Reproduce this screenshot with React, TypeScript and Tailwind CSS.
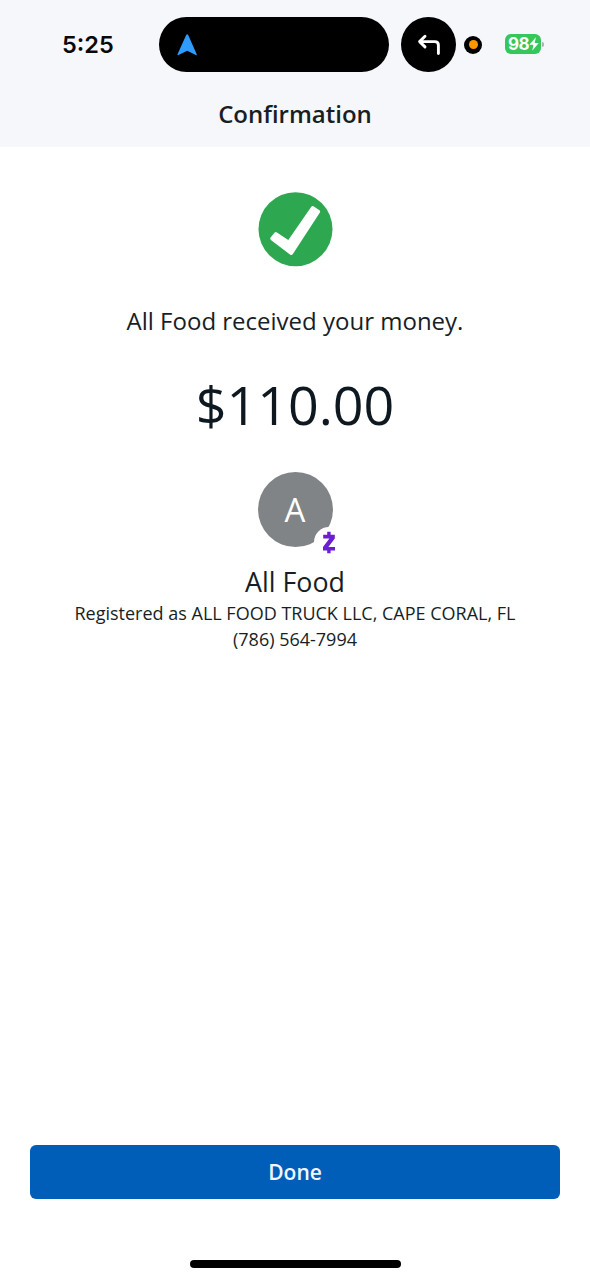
function StatusBar() {
  return (
    <div className="flex h-[89px] items-center pl-[62px]">
      <span className="w-[97px] font-['Inter',sans-serif] text-[23.5px] leading-none font-semibold text-[#08090b]">
        5:25
      </span>
      <div className="flex h-[55px] w-[230px] items-center rounded-full bg-black pl-[18px]">
        <svg className="h-[22px] w-5" viewBox="0 0 20 22" fill="#2f9bff">
          <path d="M9.2 0.9Q10.2 -0.6 11.2 0.9L19.7 20.2Q19.9 21.4 18.8 21.1L10.2 16.8L1.5 21.1Q0.2 21.4 0.5 20.2Z" />
        </svg>
      </div>
      <div className="ml-3 flex size-[55px] items-center justify-center rounded-full bg-black">
        <svg
          className="h-6 w-6"
          viewBox="0 0 24 24"
          fill="none"
          stroke="#fff"
          strokeWidth="2.9"
          strokeLinecap="round"
          strokeLinejoin="round"
        >
          <path d="M8 3.3L2.6 8.6L8 13.9M2.6 8.6H17.8Q21.4 8.6 21.4 12.2V20.5" />
        </svg>
      </div>
      <div className="ml-2 flex size-[18px] items-center justify-center rounded-full bg-black">
        <div className="size-[9px] rounded-full bg-[#ff9502]" />
      </div>
      <div className="mb-px ml-[23px] flex h-5 w-9 items-center rounded-[6px] bg-[#35c759] pl-[3px]">
        <span className="w-[21px] font-['Inter',sans-serif] text-[17px] leading-none font-bold tracking-[-0.6px] text-white">
          98
        </span>
        <svg className="h-[14px] w-[10px]" viewBox="0 0 9 12" fill="#fff">
          <path d="M6.2 0L0.3 6.7H4L2.9 12L8.8 5.1H5.1Z" />
        </svg>
      </div>
      <div className="ml-px h-[5px] w-[2px] rounded-r-full bg-[#aeb0b4]" />
    </div>
  );
}

function Avatar() {
  return (
    <div className="relative mt-[36px] flex size-[75px] items-center justify-center rounded-full bg-[#808486]">
      <span className="pb-px text-[33px] leading-none text-white">A</span>
      <div className="absolute top-[55px] left-[56px] flex size-[30px] items-center justify-center rounded-full bg-white">
        <svg className="h-[23px] w-[14px]" viewBox="0 0 14 23" fill="#6b1fd0">
          <path d="M5.2 0.8H8.6V3.8H12.8V7.4L6.4 15.9H13V19.4H8.6V22.2H5.2V19.4H1V15.9L7.4 7.4H1.2V3.8H5.2Z" />
        </svg>
      </div>
    </div>
  );
}

export default function App() {
  return (
    <div className="flex h-[1280px] w-[590px] flex-col bg-white font-['Open_Sans',sans-serif] text-[#171e25]">
      <header className="h-[147px] bg-[#f5f7fb]">
        <StatusBar />
        <h1 className="text-center text-[24px] leading-[50px] font-semibold">Confirmation</h1>
      </header>

      <main className="flex flex-1 flex-col items-center pt-[45px]">
        <svg className="size-[75px]" viewBox="0 0 75 75">
          <circle cx="37.5" cy="37.2" r="37" fill="#2da850" />
          <path
            d="M12.6 45.5L16.7 40.6Q17.7 39.6 18.9 40.5L30.3 48.1L53.3 14.7Q54.2 13.5 55.5 14.3L61.5 18.3Q62.7 19.2 61.9 20.5L34.7 62.3Q33.7 63.7 32.3 62.7L12.9 48.1Q11.6 46.8 12.6 45.5Z"
            fill="#fff"
          />
        </svg>
        <p className="mt-[38px] text-[24px] leading-[32px] whitespace-nowrap">
          All Food received your money.
        </p>
        <p className="mt-[35px] text-[53.8px] leading-[64px] text-[#0d1821]">$110.00</p>
        <Avatar />
        <h2 className="mt-[18px] text-[26.8px] leading-[34px]">All Food</h2>
        <p className="mt-px text-[18px] leading-[26px] whitespace-nowrap">
          Registered as ALL FOOD TRUCK LLC, CAPE CORAL, FL
        </p>
        <p className="text-[18px] leading-[27px]">(786) 564-7994</p>
      </main>

      <footer className="flex h-[135px] flex-col items-center px-[30px]">
        <button className="h-[54px] w-full rounded-[6px] bg-[#005eb9] text-[21px] leading-[54px] font-semibold text-[#f1f7fd]">
          Done
        </button>
        <div className="mt-[61px] h-2 w-[211px] rounded-full bg-black" />
      </footer>
    </div>
  );
}
